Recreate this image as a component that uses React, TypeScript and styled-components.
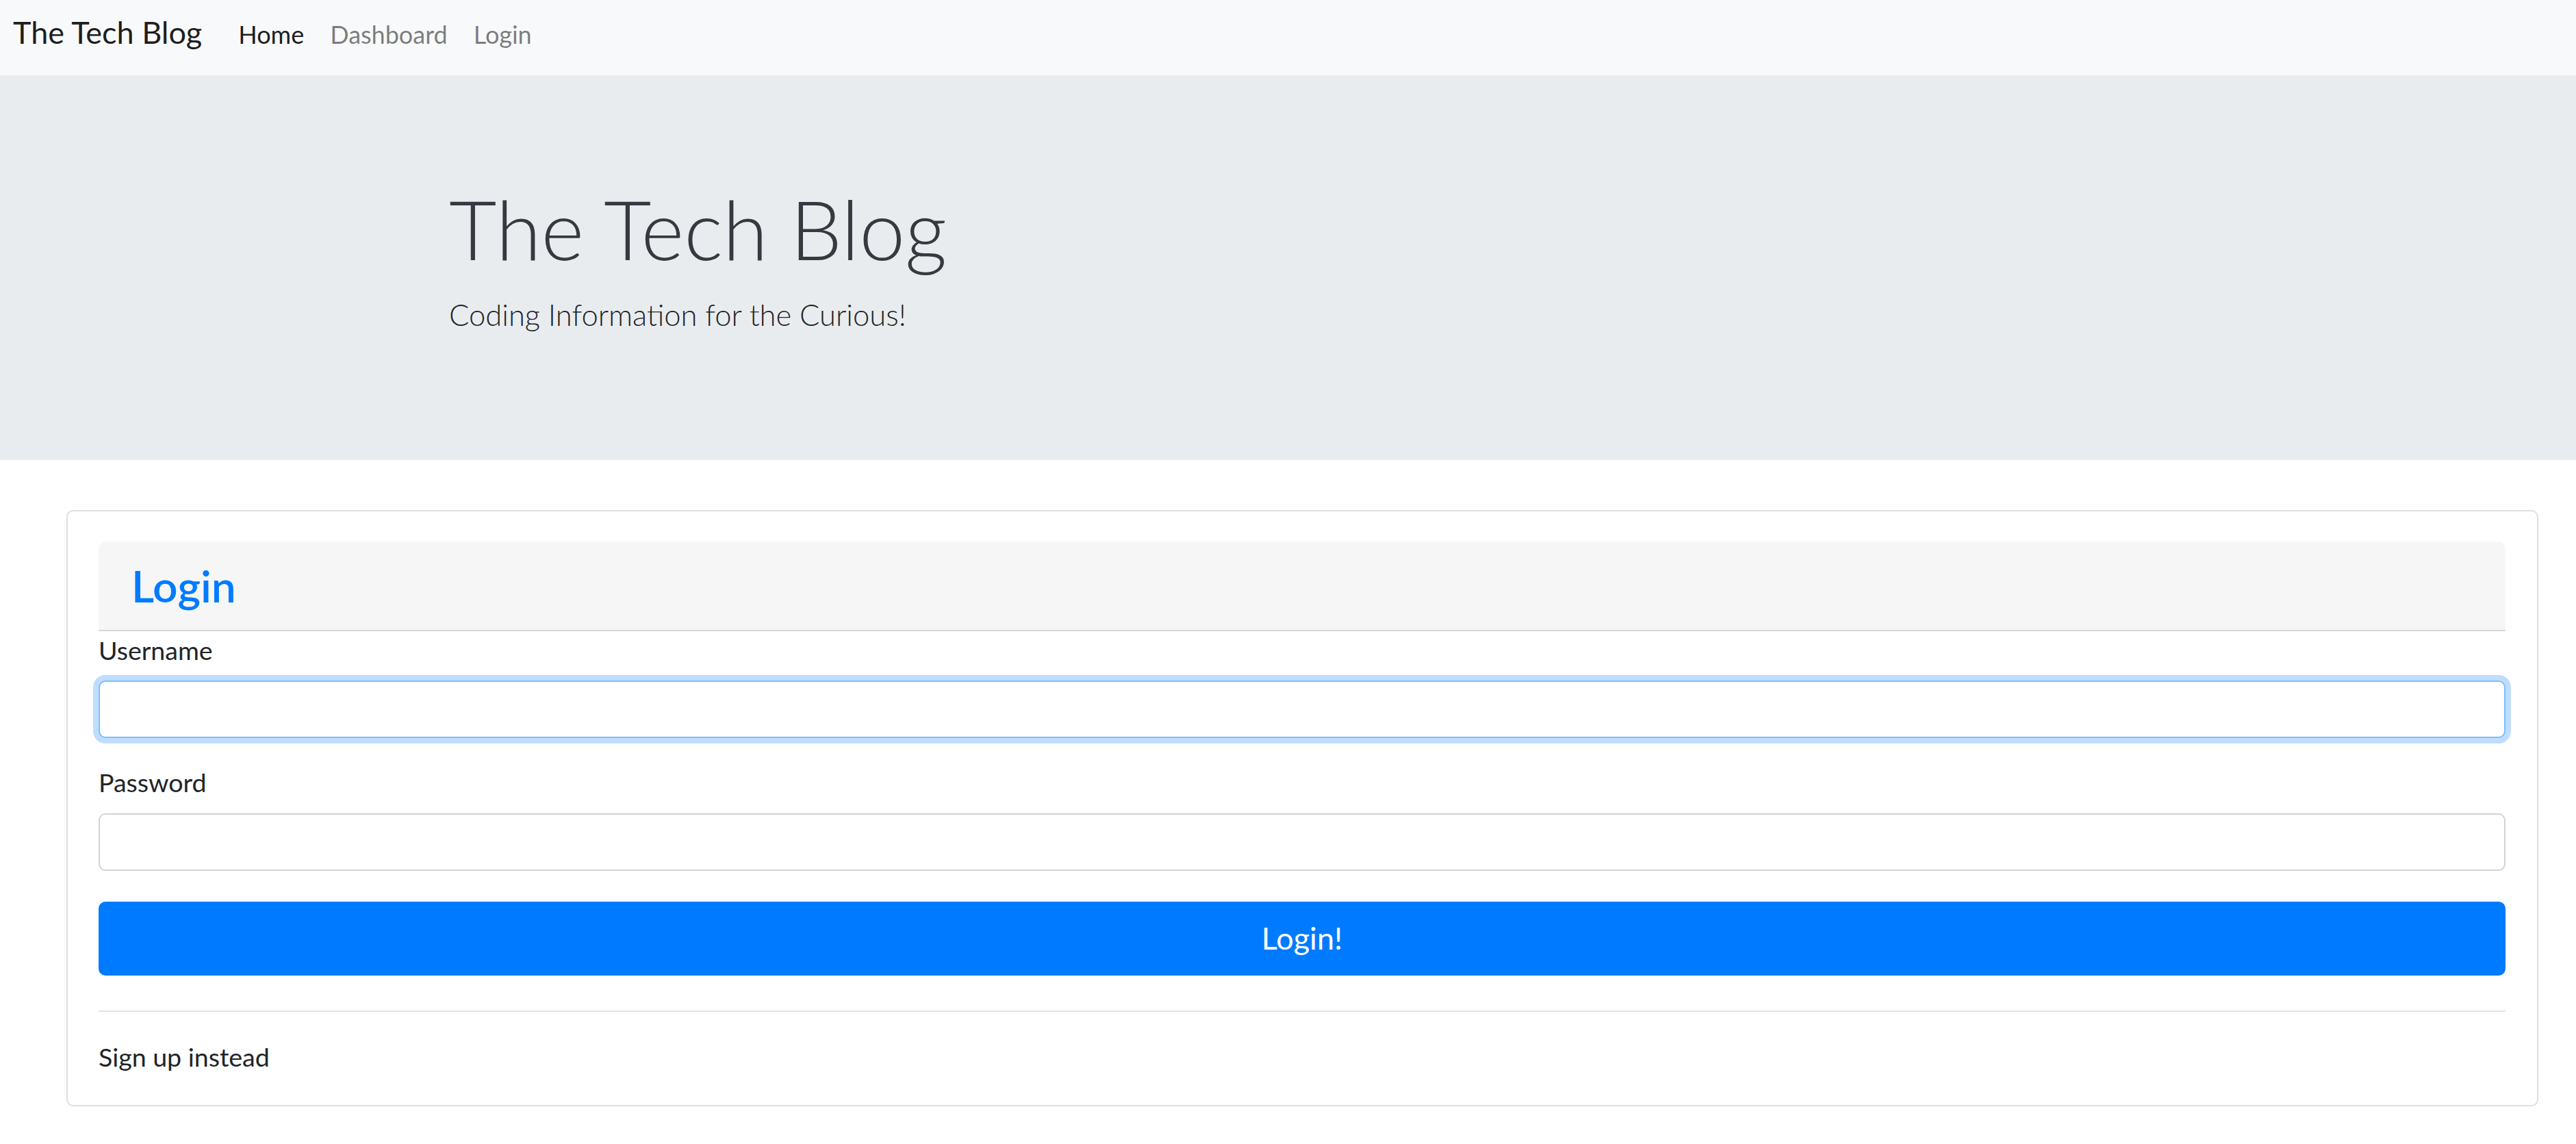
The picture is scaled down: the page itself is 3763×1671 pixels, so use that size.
import React from 'react';
import styled, { createGlobalStyle } from 'styled-components';

const GlobalStyle = createGlobalStyle`
  html, body {
    margin: 0;
    padding: 0;
    background: #fff;
  }
  body {
    font-family: Lato, "Open Sans", sans-serif;
    color: #212529;
  }
  * {
    box-sizing: border-box;
  }
`;

const Navbar = styled.nav`
  display: flex;
  align-items: baseline;
  height: 110px;
  padding: 25px 19px 0;
  background: #f8f9fa;
`;

const Brand = styled.a`
  font-size: 45px;
  line-height: 1;
  color: rgba(0, 0, 0, 0.9);
  text-decoration: none;
  margin-right: 34px;
`;

const NavLink = styled.a<{ $active?: boolean }>`
  font-size: 36px;
  line-height: 1;
  padding: 0 19px;
  color: ${(p) => (p.$active ? 'rgba(0, 0, 0, 0.9)' : 'rgba(0, 0, 0, 0.5)')};
  text-decoration: none;
`;

const Jumbotron = styled.header`
  height: 562px;
  padding: 152px 0 0 656px;
  background: #e9ecef;
  color: #343a40;
`;

const Display = styled.h1`
  margin: 0 0 21px;
  font-size: 120px;
  font-weight: 300;
  line-height: 1.2;
`;

const Lead = styled.p`
  margin: 0;
  font-size: 43.5px;
  font-weight: 300;
  line-height: 1.5;
  color: #212529;
`;

const Main = styled.main`
  padding: 73px 55px 57px 97px;
`;

const Card = styled.section`
  border: 2px solid #dfdfdf;
  border-radius: 10px;
  padding: 44px 46px 42px 45px;
`;

const CardHeader = styled.div`
  height: 131px;
  padding: 27px 48px 0;
  background: #f6f6f6;
  border-bottom: 2px solid #d6d6d6;
  border-radius: 10px 10px 0 0;
`;

const CardTitle = styled.h3`
  margin: 0;
  font-size: 64px;
  font-weight: 600;
  line-height: 1.2;
  color: #007bff;
`;

const Form = styled.form`
  display: flex;
  flex-direction: column;
`;

const FormGroup = styled.div`
  display: flex;
  flex-direction: column;
  margin-bottom: 37px;
`;

const Label = styled.label`
  font-size: 37.5px;
  line-height: 1.5;
  margin-bottom: 16px;
`;

const Input = styled.input<{ $focused?: boolean }>`
  height: 84px;
  width: 100%;
  padding: 0 29px;
  font: inherit;
  font-size: 38.4px;
  background: #fff;
  border: 2px solid ${(p) => (p.$focused ? '#80bdff' : '#ced4da')};
  border-radius: 10px;
  outline: none;
  box-shadow: ${(p) => (p.$focused ? '0 0 0 8px rgba(0, 123, 255, 0.25)' : 'none')};
`;

const SubmitButton = styled.button`
  display: flex;
  align-items: center;
  justify-content: center;
  height: 108px;
  width: 100%;
  margin-top: 8px;
  font: inherit;
  font-size: 45px;
  line-height: 1.5;
  color: #fff;
  background: #007bff;
  border: 2px solid #007bff;
  border-radius: 10px;
  cursor: pointer;
`;

const Divider = styled.hr`
  margin: 51px 0 38px;
  border: 0;
  border-top: 2px solid #e4e4e4;
`;

const SwitchLink = styled.a`
  display: block;
  font-size: 37.5px;
  line-height: 1.5;
  color: #212529;
  text-decoration: none;
`;

const App: React.FC = () => {
  return (
    <>
      <GlobalStyle />
      <Navbar>
        <Brand href="#">The Tech Blog</Brand>
        <NavLink href="#" $active>
          Home
        </NavLink>
        <NavLink href="#">Dashboard</NavLink>
        <NavLink href="#">Login</NavLink>
      </Navbar>

      <Jumbotron>
        <Display>The Tech Blog</Display>
        <Lead>Coding Information for the Curious!</Lead>
      </Jumbotron>

      <Main>
        <Card>
          <CardHeader>
            <CardTitle>Login</CardTitle>
          </CardHeader>
          <Form onSubmit={(e) => e.preventDefault()}>
            <FormGroup>
              <Label htmlFor="username">Username</Label>
              <Input id="username" type="text" $focused />
            </FormGroup>
            <FormGroup>
              <Label htmlFor="password">Password</Label>
              <Input id="password" type="password" />
            </FormGroup>
            <SubmitButton type="submit">Login!</SubmitButton>
          </Form>
          <Divider />
          <SwitchLink href="#">Sign up instead</SwitchLink>
        </Card>
      </Main>
    </>
  );
};

export default App;
